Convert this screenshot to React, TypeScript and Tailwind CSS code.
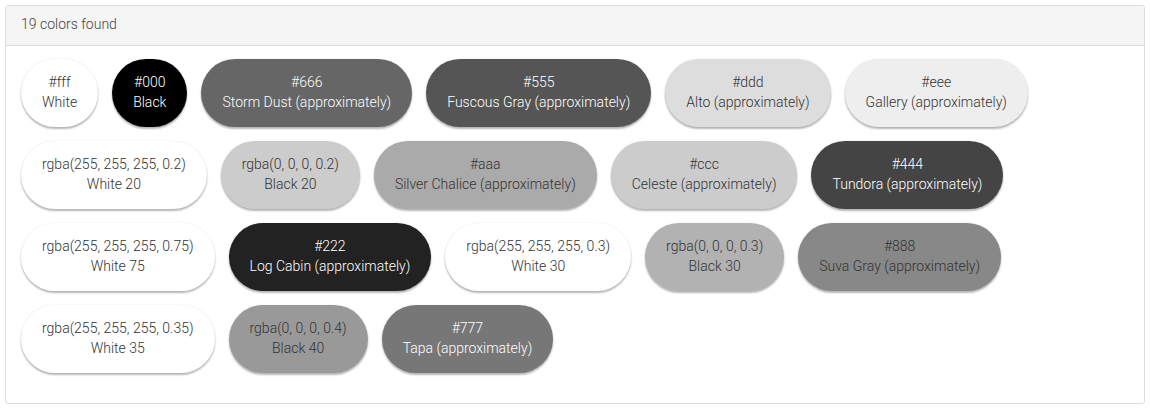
type Swatch = {
  code: string;
  name: string;
  bg: string;
  dark?: boolean;
};

const swatches: Swatch[] = [
  { code: "#fff", name: "White", bg: "bg-[#fff]" },
  { code: "#000", name: "Black", bg: "bg-[#000]", dark: true },
  { code: "#666", name: "Storm Dust (approximately)", bg: "bg-[#666]", dark: true },
  { code: "#555", name: "Fuscous Gray (approximately)", bg: "bg-[#555]", dark: true },
  { code: "#ddd", name: "Alto (approximately)", bg: "bg-[#ddd]" },
  { code: "#eee", name: "Gallery (approximately)", bg: "bg-[#eee]" },
  { code: "rgba(255, 255, 255, 0.2)", name: "White 20", bg: "bg-[rgba(255,255,255,0.2)]" },
  { code: "rgba(0, 0, 0, 0.2)", name: "Black 20", bg: "bg-[rgba(0,0,0,0.2)]" },
  { code: "#aaa", name: "Silver Chalice (approximately)", bg: "bg-[#aaa]" },
  { code: "#ccc", name: "Celeste (approximately)", bg: "bg-[#ccc]" },
  { code: "#444", name: "Tundora (approximately)", bg: "bg-[#444]", dark: true },
  { code: "rgba(255, 255, 255, 0.75)", name: "White 75", bg: "bg-[rgba(255,255,255,0.75)]" },
  { code: "#222", name: "Log Cabin (approximately)", bg: "bg-[#222]", dark: true },
  { code: "rgba(255, 255, 255, 0.3)", name: "White 30", bg: "bg-[rgba(255,255,255,0.3)]" },
  { code: "rgba(0, 0, 0, 0.3)", name: "Black 30", bg: "bg-[rgba(0,0,0,0.3)]" },
  { code: "#888", name: "Suva Gray (approximately)", bg: "bg-[#888]" },
  { code: "rgba(255, 255, 255, 0.35)", name: "White 35", bg: "bg-[rgba(255,255,255,0.35)]" },
  { code: "rgba(0, 0, 0, 0.4)", name: "Black 40", bg: "bg-[rgba(0,0,0,0.4)]" },
  { code: "#777", name: "Tapa (approximately)", bg: "bg-[#777]", dark: true },
];

export default function App() {
  return (
    <div className="min-h-[409px] bg-white p-[5px] pb-[4px] font-['Roboto',_'Liberation_Sans',_sans-serif] font-light">
      <div className="overflow-hidden rounded-[3px] border border-[#ddd]">
        <div className="flex h-[40px] items-center border-b border-[#ddd] bg-[#f5f5f5] px-[15px] pb-[2px] text-[14px] text-[#444]">
          {swatches.length} colors found
        </div>
        <div className="flex flex-wrap gap-[14px] px-[15px] pt-[13px] pb-[30px]">
          {swatches.map((s) => (
            <div
              key={s.code}
              className={`flex h-[68px] flex-col items-center justify-center rounded-full px-[21px] pb-[2px] text-center text-[14px] leading-[20px] shadow-[0_2px_2px_rgba(0,0,0,0.28),0_0_2px_rgba(0,0,0,0.1)] ${s.bg} ${
                s.dark ? "text-white" : "text-[#333]"
              }`}
            >
              <div>{s.code}</div>
              <div>{s.name}</div>
            </div>
          ))}
        </div>
      </div>
    </div>
  );
}
